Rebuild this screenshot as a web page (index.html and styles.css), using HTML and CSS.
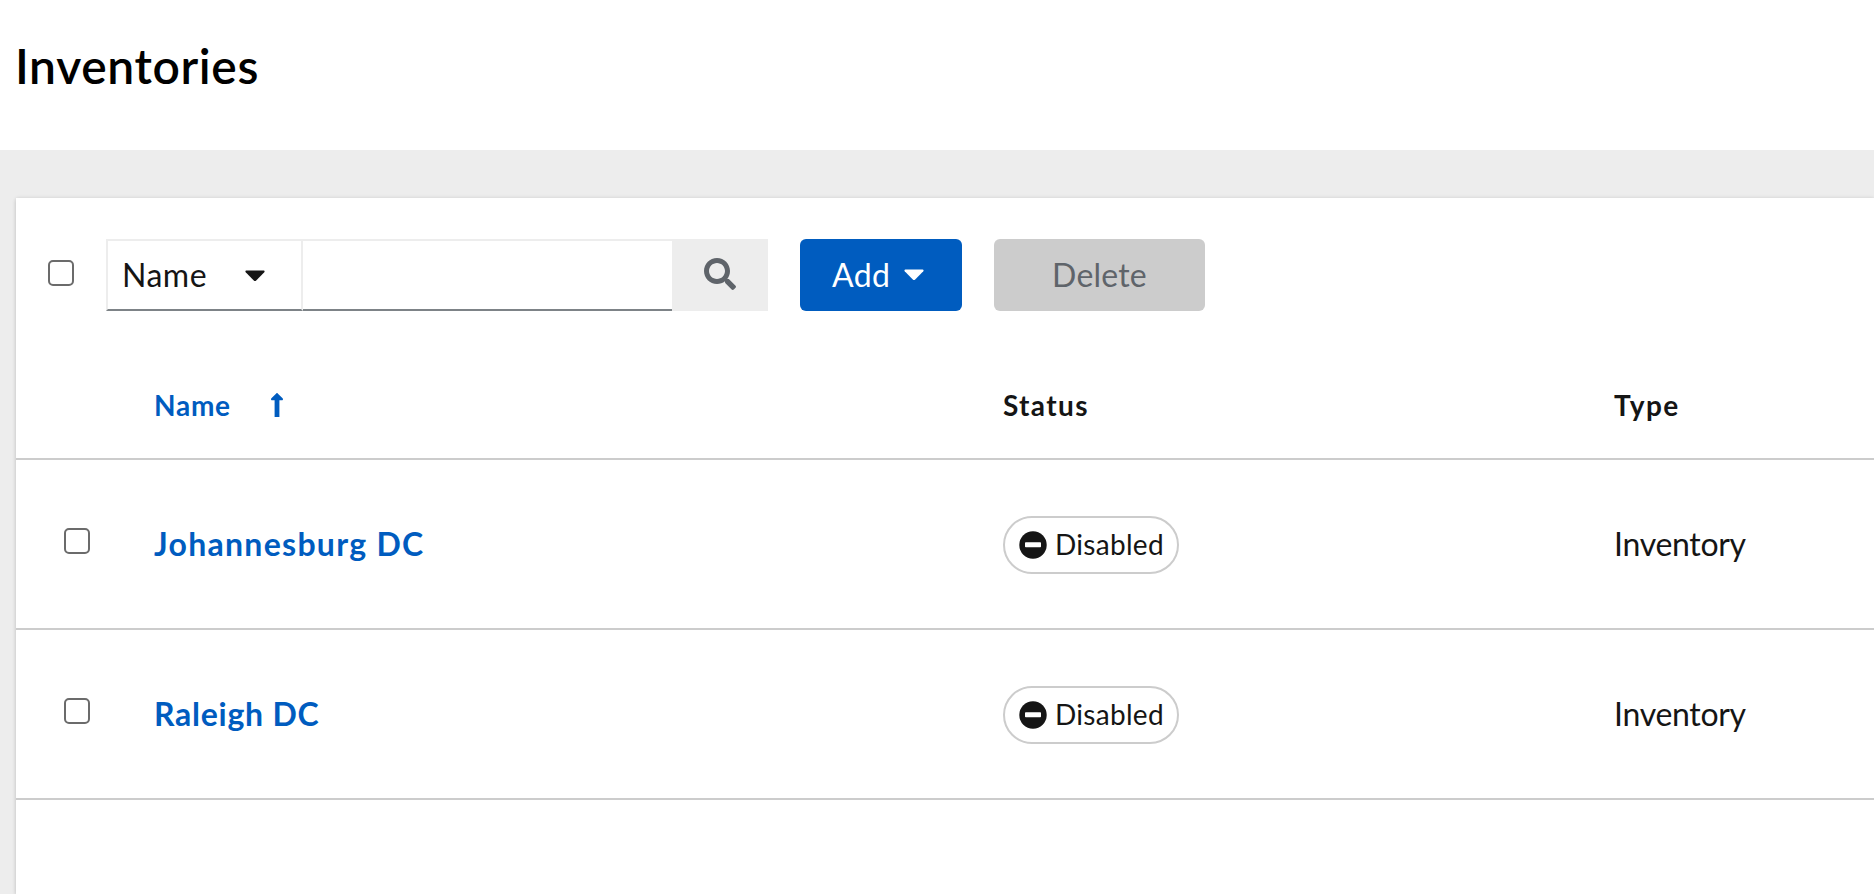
FILE: index.html
```html
<!DOCTYPE html>
<html lang="en">
<head>
<meta charset="utf-8">
<title>Inventories</title>
<link rel="stylesheet" href="styles.css">
</head>
<body>
<header class="page-header"><h1 class="page-title">Inventories</h1></header>
<main class="page-main">
  <section class="card">
    <div class="toolbar">
      <span class="check" role="checkbox" aria-checked="false"></span>
      <div class="search">
        <div class="filter"><span class="t-filter">Name</span>
          <svg class="caret" viewBox="0 0 20 12"><path d="M1.4 0.5h17.2c.9 0 1.300 1 .7 1.700L11.200 10.400a1.700 1.700 0 0 1-2.400 0L.7 2.200C.1 1.500.5.500 1.400.500z"/></svg>
        </div>
        <div class="search-input"></div>
        <div class="search-btn"><svg class="search-icon" viewBox="0 0 512 512"><path d="M505 442.700L405.300 343c-4.500-4.500-10.600-7-17-7H372c27.600-35.300 44-79.700 44-128C416 93.100 322.900 0 208 0S0 93.100 0 208s93.100 208 208 208c48.300 0 92.700-16.400 128-44v16.300c0 6.400 2.500 12.500 7 17l99.700 99.700c9.400 9.400 24.600 9.400 33.900 0l28.300-28.300c9.400-9.400 9.400-24.600.1-34zM208 336c-70.700 0-128-57.200-128-128 0-70.700 57.200-128 128-128 70.700 0 128 57.200 128 128 0 70.700-57.200 128-128 128z"/></svg></div>
      </div>
      <div class="btn btn-primary"><span class="t-add">Add</span>
        <svg class="caret" viewBox="0 0 20 12"><path d="M1.4 0.5h17.2c.9 0 1.300 1 .7 1.700L11.200 10.400a1.700 1.700 0 0 1-2.400 0L.7 2.200C.1 1.500.5.500 1.400.500z"/></svg>
      </div>
      <div class="btn btn-disabled"><span class="t-delete">Delete</span></div>
    </div>
    <div class="table">
      <div class="row row-head">
        <div></div>
        <div class="cell-sort"><span class="t-hname">Name</span>
          <svg class="sort-icon" viewBox="0 0 12 24"><path d="M3.600 24V7.200H1C0 7.200-.3 6 .4 5.300L5.300.4c.4-.4 1-.4 1.400 0l4.900 4.900C12.300 6 12 7.200 11 7.200H8.400V24z"/></svg>
        </div>
        <div><span class="t-head">Status</span></div>
        <div><span class="t-head">Type</span></div>
      </div>
      <div class="row">
        <div class="cell-check"><span class="check" role="checkbox" aria-checked="false"></span></div>
        <div><a class="link t-johannesburg">Johannesburg DC</a></div>
        <div><span class="label"><svg class="minus" viewBox="0 0 28 28"><circle cx="14" cy="14" r="13.700"/><rect class="minus-bar" x="6" y="11.300" width="16" height="5" rx=".8"/></svg><span class="t-disabled">Disabled</span></span></div>
        <div><span class="t-inventory">Inventory</span></div>
      </div>
      <div class="row">
        <div class="cell-check"><span class="check" role="checkbox" aria-checked="false"></span></div>
        <div><a class="link t-raleigh">Raleigh DC</a></div>
        <div><span class="label"><svg class="minus" viewBox="0 0 28 28"><circle cx="14" cy="14" r="13.700"/><rect class="minus-bar" x="6" y="11.300" width="16" height="5" rx=".8"/></svg><span class="t-disabled">Disabled</span></span></div>
        <div><span class="t-inventory">Inventory</span></div>
      </div>
    </div>
  </section>
</main>
</body>
</html>
```
FILE: styles.css
```css
* { box-sizing: border-box; }
body { margin: 0; height: 894px; overflow: hidden; display: flex; flex-direction: column; background: #ededed; color: #151515; font: 400 32px/48px Lato, "Open Sans", sans-serif; }
svg { display: block; flex: none; fill: currentColor; }
.page-header { height: 150px; flex: none; padding: 36px 0 0 15px; background: #fff; }
.page-title { margin: 0; font-size: 48px; line-height: 60px; font-weight: 600; color: #000; letter-spacing: .63px; }
.page-main { flex: 1; display: flex; padding: 48px 0 0 16px; }
.card { flex: 1; background: #fff; box-shadow: 0 2px 4px rgba(3,3,3,.12), 0 0 4px rgba(3,3,3,.1); }
.toolbar { display: flex; align-items: center; height: 154px; padding-left: 32px; }
.check { display: block; width: 26px; height: 26px; border: 2px solid #6b6b6b; border-radius: 5px; background: #fff; }
.toolbar .check { margin: -4px 32px 0 0; }
.search { display: flex; height: 72px; margin-right: 32px; }
.filter { display: flex; align-items: center; justify-content: space-between; width: 197px; padding: 0 36px 0 14px; border: 2px solid #ededed; border-bottom-color: #7d8387; }
.caret { width: 20px; height: 12px; margin-top: 1px; }
.btn .caret { margin-top: 0; }
.search-input { width: 369px; border: solid #ededed; border-width: 2px 0; border-bottom-color: #7d8387; }
.search-btn { display: flex; align-items: center; justify-content: center; width: 96px; padding-bottom: 2px; background: #ededed; color: #5f646a; }
.search-icon { width: 32px; height: 32px; }
.btn { display: flex; align-items: center; height: 72px; border-radius: 6px; }
.btn-primary { justify-content: space-between; width: 162px; padding: 0 38px 0 32px; margin-right: 32px; background: #005cbf; color: #fff; }
.btn-disabled { justify-content: center; width: 211px; background: #ccc; color: #5f646a; }
.row { display: grid; grid-template-columns: 138px 849px 611px 1fr; align-items: center; height: 170px; border-bottom: 2px solid #ccc; }
.row-head { height: 108px; font-size: 28px; font-weight: 700; }
.cell-sort { display: flex; align-items: center; gap: 40px; color: #005cbf; }
.sort-icon { width: 12px; height: 24px; }
.cell-check { padding: 0 0 6px 48px; }
.link { color: #005cbf; font-weight: 700; }
.label { display: flex; align-items: center; width: 176px; height: 58px; margin-top: 2px; padding-left: 14px; border: 2px solid #ccc; border-radius: 29px; font-size: 28px; }
.minus { width: 28px; height: 28px; margin-right: 8px; }
.minus-bar { fill: #fff; }
.t-filter { letter-spacing: .5px; }
.t-add { letter-spacing: .4px; }
.t-delete { letter-spacing: .2px; }
.t-hname { letter-spacing: .75px; }
.t-head { letter-spacing: 1.35px; }
.t-johannesburg { letter-spacing: 1.28px; }
.t-raleigh { letter-spacing: .75px; }
.t-inventory { letter-spacing: -.3px; }
.t-disabled { letter-spacing: .3px; margin-bottom: 2px; }
```
